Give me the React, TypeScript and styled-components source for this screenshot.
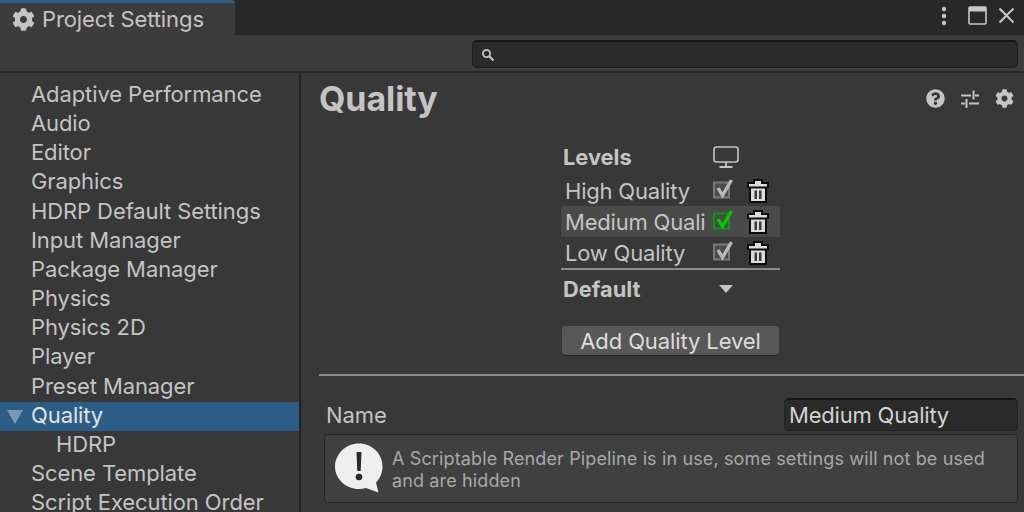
import styled, { createGlobalStyle } from "styled-components";
import { FaCog, FaQuestionCircle } from "react-icons/fa";

const categories = [
  { label: "Adaptive Performance" },
  { label: "Audio" },
  { label: "Editor" },
  { label: "Graphics" },
  { label: "HDRP Default Settings" },
  { label: "Input Manager" },
  { label: "Package Manager" },
  { label: "Physics" },
  { label: "Physics 2D" },
  { label: "Player" },
  { label: "Preset Manager" },
  { label: "Quality", selected: true },
  { label: "HDRP", nested: true },
  { label: "Scene Template" },
  { label: "Script Execution Order" },
];

const levels = [
  { label: "High Quality" },
  { label: "Medium Quali", active: true },
  { label: "Low Quality" },
];

function Trash() {
  return (
    <TrashIcon width="22" height="24" viewBox="0 0 22 24">
      <path d="M6 0h10v3h6v6h-2v15H2V9H0V3h6z" fill="#0c0c0c" />
      <path d="M8 2h6v3h6v2.500H2V5h6zM4 9.500h14V22H4z" fill="#dcdcdc" />
      <path d="M7.500 11.500H10V20H7.500zM12 11.500h2.500V20H12z" fill="#3a3a3a" />
    </TrashIcon>
  );
}

function Check({ active }: { active?: boolean }) {
  const line = active ? "#0c980c" : "#7a7a7a";
  const mark = active ? "#06c606" : "#b8b8b8";
  return (
    <svg width="22" height="24" viewBox="0 0 22 24">
      <rect x="2" y="3.500" width="15" height="15" fill={active ? "none" : "#4c4c4c"} stroke={line} strokeWidth="2" />
      <path d="M6 9l4.500 7.500L19.500 1" fill="none" stroke={mark} strokeWidth="3.400" />
    </svg>
  );
}

export default function App() {
  return (
    <>
      <GlobalStyle />
      <Window>
        <TitleBar>
          <Tab>
            <FaCog size={23} color="#c4c4c4" />
            <TabLabel>Project Settings</TabLabel>
          </Tab>
          <WindowButtons>
            <KebabIcon width="8" height="20" viewBox="0 0 8 20">
              <circle cx="4" cy="3" r="2.200" fill="#c8c8c8" />
              <circle cx="4" cy="10" r="2.200" fill="#c8c8c8" />
              <circle cx="4" cy="17" r="2.200" fill="#c8c8c8" />
            </KebabIcon>
            <svg width="19" height="19" viewBox="0 0 19 19">
              <rect x="1" y="1" width="17" height="17" rx="1" fill="none" stroke="#c8c8c8" strokeWidth="1.600" />
              <rect x="1" y="1" width="17" height="4.500" fill="#c8c8c8" />
            </svg>
            <svg width="17" height="17" viewBox="0 0 17 17">
              <path d="M1.500 1.500l14 14M15.500 1.500l-14 14" stroke="#c8c8c8" strokeWidth="2" fill="none" />
            </svg>
          </WindowButtons>
        </TitleBar>
        <Toolbar>
          <SearchBox>
            <svg width="14" height="14" viewBox="0 0 14 14">
              <circle cx="5.500" cy="5.500" r="3.600" fill="none" stroke="#c4c4c4" strokeWidth="1.800" />
              <path d="M8.200 8.200l4.300 4.300" stroke="#c4c4c4" strokeWidth="2.200" />
            </svg>
          </SearchBox>
        </Toolbar>
        <Body>
          <Sidebar>
            {categories.map((item) => (
              <SideRow key={item.label} $selected={item.selected} $nested={item.nested}>
                {item.selected && <Arrow />}
                {item.label}
              </SideRow>
            ))}
          </Sidebar>
          <Main>
            <Header>
              <Title>Quality</Title>
              <HeaderIcons>
                <FaQuestionCircle size={19} color="#c4c4c4" />
                <svg width="20" height="20" viewBox="0 0 20 20">
                  <path d="M1 6.500h10M15 6.500h4M1 14.500h4M9 14.500h10" stroke="#c4c4c4" strokeWidth="1.800" />
                  <path d="M12.500 1.500h2v9h-2zM5.500 10h2v9h-2z" fill="#c4c4c4" />
                </svg>
                <FaCog size={19} color="#c4c4c4" />
              </HeaderIcons>
            </Header>
            <LevelsPanel>
              <LevelsHead>
                <BoldLabel>Levels</BoldLabel>
                <svg width="26" height="23" viewBox="0 0 26 23">
                  <rect x="1" y="1" width="24" height="15" rx="2.500" fill="none" stroke="#c4c4c4" strokeWidth="1.600" />
                  <path d="M13 16v4M6.500 21h13" stroke="#c4c4c4" strokeWidth="1.800" />
                </svg>
              </LevelsHead>
              {levels.map((level) => (
                <LevelRow key={level.label} $active={level.active}>
                  <LevelName>{level.label}</LevelName>
                  <Check active={level.active} />
                  <Trash />
                </LevelRow>
              ))}
              <DefaultRow>
                <BoldLabel>Default</BoldLabel>
                <Caret />
              </DefaultRow>
              <AddButton>Add Quality Level</AddButton>
            </LevelsPanel>
            <Divider />
            <NameRow>
              <NameLabel>Name</NameLabel>
              <NameField>Medium Quality</NameField>
            </NameRow>
            <HelpBox>
              <HelpIcon width="50" height="52" viewBox="0 0 50 52">
                <path d="M25 1.500c13 0 23.500 10.200 23.500 23 0 6.500-2.500 12-6.500 16l2.500 10-12.500-4.500c-2.300.7-4.600 1-7 1-13 0-24-10-24-22.500S12 1.500 25 1.500z" fill="#efefef" />
                <path d="M22.500 10h5l-.8 19h-3.400z" fill="#2b2b2b" />
                <circle cx="25" cy="35" r="3.300" fill="#2b2b2b" />
              </HelpIcon>
              <HelpText>A Scriptable Render Pipeline is in use, some settings will not be used and are hidden</HelpText>
            </HelpBox>
          </Main>
        </Body>
      </Window>
    </>
  );
}

const GlobalStyle = createGlobalStyle`
  html,
  body {
    margin: 0;
    padding: 0;
    overflow: hidden;
    background: #383838;
  }
`;

const Window = styled.div`
  width: 1024px;
  height: 512px;
  overflow: hidden;
  display: flex;
  flex-direction: column;

  font-family: Inter, "Liberation Sans", sans-serif;
  font-size: 22px;
  letter-spacing: -0.1px;
  color: #c4c4c4;
  background: #383838;
`;

const TitleBar = styled.div`
  flex: none;
  height: 35px;
  display: flex;
  justify-content: space-between;
  background: #282828;
`;

const Tab = styled.div`
  width: 235px;
  box-sizing: border-box;
  padding-left: 12px;
  display: flex;
  align-items: center;
  gap: 7px;
  background: #3c3c3c;
  border-top: 3px solid #2c5d87;
  border-top-right-radius: 3px;
`;

const TabLabel = styled.span`
  font-size: 22px;
`;

const WindowButtons = styled.div`
  display: flex;
  align-items: center;
  gap: 11px;
  padding: 0 9px 4px 0;
`;

const KebabIcon = styled.svg`
  margin-right: 9px;
`;

const Toolbar = styled.div`
  flex: none;
  height: 38px;
  box-sizing: border-box;
  padding: 5px 6px 0 472px;
  background: #3c3c3c;
  border-bottom: 2px solid #262626;
`;

const SearchBox = styled.div`
  height: 28px;
  box-sizing: border-box;
  padding-left: 8px;
  display: flex;
  align-items: center;
  background: #2a2a2a;
  border: 1px solid #1e1e1e;
  border-top: 2px solid #161616;
  border-radius: 5px;
`;

const Body = styled.div`
  flex: 1;
  display: flex;
  min-height: 0;
`;

const Sidebar = styled.div`
  flex: none;
  width: 301px;
  box-sizing: border-box;
  padding-top: 8px;
  border-right: 2px solid #232323;
`;

const SideRow = styled.div<{ $selected?: boolean; $nested?: boolean }>`
  position: relative;
  height: 29.170px;
  line-height: 26.500px;
  padding-left: ${(p) => (p.$nested ? "56px" : "31px")};
  white-space: nowrap;
  color: ${(p) => (p.$selected ? "#e2e2e2" : "#c4c4c4")};
  background: ${(p) => (p.$selected ? "#2c5d87" : "transparent")};
`;

const Arrow = styled.span`
  position: absolute;
  left: 7px;
  top: 8px;
  border-left: 8px solid transparent;
  border-right: 8px solid transparent;
  border-top: 14px solid #7f98ac;
`;

const Main = styled.div`
  flex: 1;
  min-width: 0;
  padding: 0 6px 0 18px;
`;

const Header = styled.div`
  height: 51px;
  display: flex;
  align-items: center;
  justify-content: space-between;
`;

const Title = styled.h1`
  margin: 0;
  font-size: 34px;
  font-weight: 700;
  color: #c4c4c4;
`;

const HeaderIcons = styled.div`
  display: flex;
  align-items: center;
  gap: 15px;
  padding-right: 4px;
`;

const LevelsPanel = styled.div`
  width: 219px;
  margin: 17px 0 0 242px;
`;

const LevelsHead = styled.div`
  height: 32px;
  padding: 0 41px 2px 2px;
  display: flex;
  align-items: center;
  justify-content: space-between;
`;

const BoldLabel = styled.span`
  font-weight: 700;
  font-size: 21.800px;
  letter-spacing: 0;
`;

const LevelRow = styled.div<{ $active?: boolean }>`
  height: 31px;
  padding-left: 4px;
  display: flex;
  align-items: center;
  background: ${(p) => (p.$active ? "#4a4a4a" : "transparent")};
`;

const LevelName = styled.span`
  width: 147px;
  white-space: nowrap;
  overflow: hidden;
  letter-spacing: -0.200px;
`;

const TrashIcon = styled.svg`
  margin-left: 13px;
`;

const DefaultRow = styled(LevelsHead)`
  height: 37px;
  padding: 0 47px 0 2px;
  border-top: 2px solid #8a8a8a;
`;

const Caret = styled.span`
  border-left: 7px solid transparent;
  border-right: 7px solid transparent;
  border-top: 8px solid #c4c4c4;
`;

const AddButton = styled.button`
  display: block;
  width: 217px;
  height: 30px;
  margin: 19px 0 0 1px;
  padding: 0;
  font: inherit;
  letter-spacing: -0.100px;
  color: #dcdcdc;
  background: #585858;
  border: none;
  border-bottom: 1px solid #242424;
  border-radius: 4px;
`;

const Divider = styled.div`
  height: 2px;
  margin: 18px -6px 0 0;
  background: #8a8a8a;
`;

const NameRow = styled.div`
  margin: 21px 0 0 7px;
  height: 34px;
  display: flex;
  align-items: center;
  justify-content: space-between;
`;

const NameLabel = styled.span`
  padding-top: 2px;
`;

const NameField = styled.div`
  width: 234px;
  height: 33px;
  box-sizing: border-box;
  padding-left: 4px;
  line-height: 31px;
  letter-spacing: -0.200px;
  color: #d2d2d2;
  background: #2a2a2a;
  border: 1px solid #202020;
  border-top: 2px solid #161616;
  border-radius: 5px;
`;

const HelpBox = styled.div`
  margin: 3px 0 0 5px;
  height: 69px;
  box-sizing: border-box;
  padding: 7px 12px 0 9px;
  display: flex;
  gap: 8px;
  background: #404040;
  border: 1px solid #262626;
  border-radius: 4px;
`;

const HelpIcon = styled.svg`
  flex: none;
`;

const HelpText = styled.p`
  margin: 0;
  padding-top: 6px;
  font-size: 18px;
  line-height: 22px;
  letter-spacing: 0.130px;
  color: #a8a8a8;
`;
